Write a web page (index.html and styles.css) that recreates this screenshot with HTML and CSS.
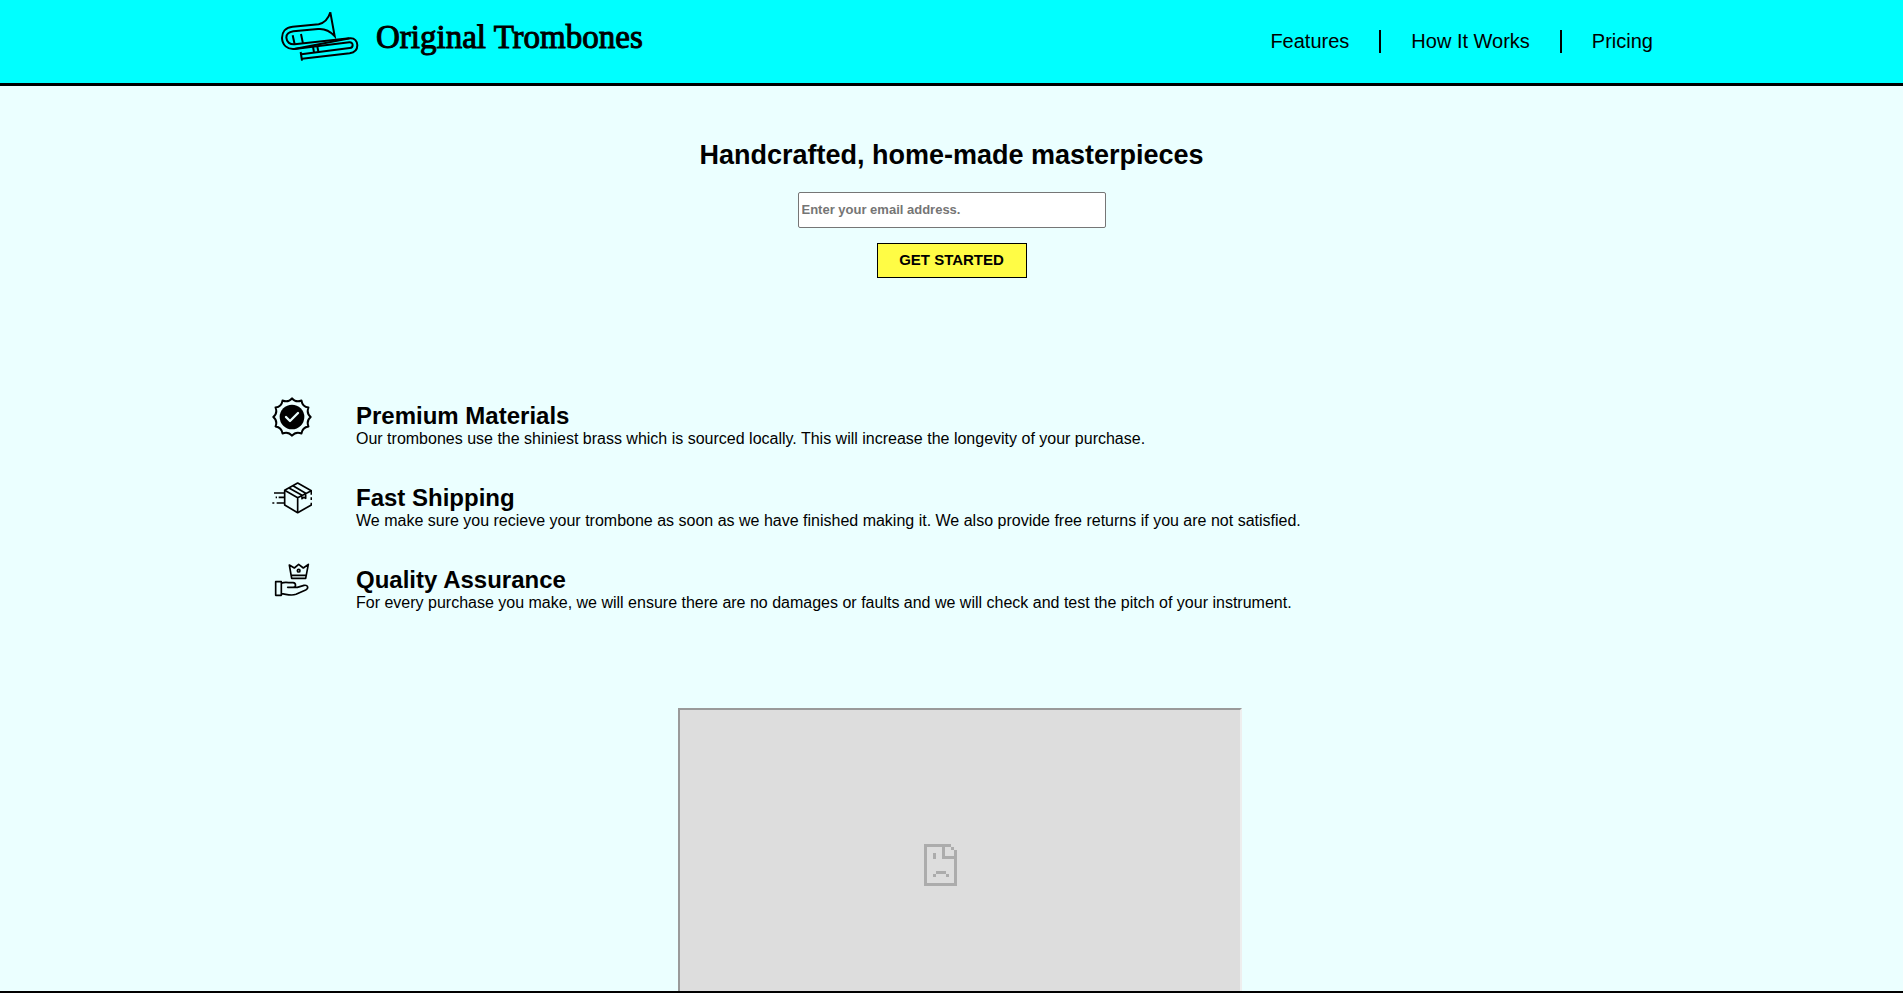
FILE: index.html
```html
<!DOCTYPE html>
<html lang="en">
<head>
  <meta charset="utf-8">
  <meta name="viewport" content="width=device-width, initial-scale=1">
  <title>Original Trombones</title>
  <link rel="stylesheet" href="styles.css">
</head>
<body>
  <header class="header">
    <div class="container header-inner">
      <a class="brand" href="#top">
        <svg class="brand-logo" viewBox="30 30 240 156" fill="none" stroke="#000" stroke-width="6" aria-hidden="true">
          <path d="M181 37C174 60 163 69 146 73L68 80C46 82 36 97 36 114C37 135 52 149 73 147L240 115C254 114 262 123 262 136C262 150 252 158 239 160L96 176"/>
          <path d="M181 37L194 108C178 91 163 85 144 87L70 94C56 96 49 103 49 113C50 127 60 134 74 133L238 115"/>
          <path d="M73 147L238 127C251 126 251 143 239 144L94 163"/>
          <path d="M92 156L96 182M68 106L74 133M93 102L99 131M129 140L132 157M142 139L145 155"/>
        </svg>
        <span class="brand-name">Original Trombones</span>
      </a>
      <nav class="nav" aria-label="Main">
        <a class="nav-link" href="#features">Features</a>
        <a class="nav-link" href="#how-it-works">How It Works</a>
        <a class="nav-link" href="#pricing">Pricing</a>
      </nav>
    </div>
  </header>

  <main class="main" id="top">
    <section class="hero">
      <h1 class="hero-title">Handcrafted, home-made masterpieces</h1>
      <form class="signup">
        <input class="signup-email" type="email" name="email" aria-label="Email address" placeholder="Enter your email address.">
        <button class="signup-button" type="submit">GET STARTED</button>
      </form>
    </section>

    <section class="container features" id="features">
      <article class="feature">
        <svg class="feature-icon" viewBox="36 36 120 120" aria-hidden="true">
          <g transform="translate(96 96)">
            <path fill="none" stroke="#000" stroke-width="6" stroke-linejoin="round" d="M0-56Q11.400-42.500 28.500-49.400Q31.100-31.100 49.400-28.500Q42.500-11.400 56 0Q42.500 11.400 49.400 28.500Q31.100 31.100 28.500 49.400Q11.400 42.500 0 56Q-11.400 42.500-28.500 49.400Q-31.100 31.100-49.400 28.500Q-42.500 11.400-56 0Q-42.500-11.400-49.400-28.500Q-31.100-31.100-28.500-49.400Q-11.400-42.500 0-56Z"/>
            <circle r="37"/>
            <path d="M-18 0L-6 12L18-12" fill="none" stroke="#ebffff" stroke-width="7" stroke-linecap="round" stroke-linejoin="round"/>
          </g>
        </svg>
        <div class="feature-text">
          <h2 class="feature-title">Premium Materials</h2>
          <p class="feature-copy">Our trombones use the shiniest brass which is sourced locally. This will increase the longevity of your purchase.</p>
        </div>
      </article>
      <article class="feature">
        <svg class="feature-icon" viewBox="36 27 120 120" fill="none" stroke="#000" stroke-width="5" stroke-linejoin="round" aria-hidden="true">
          <path d="M154 74V62L113 39L74 61V105L113 128L154 105V98M154 82V90"/>
          <path d="M74 61L113 83L154 62M113 83V128M87 54L126 76V86L131 82L137 85V70L99 47"/>
          <path d="M42 69H74M56 82H74M47 82H51M50 99H74M37 99H43"/>
        </svg>
        <div class="feature-text">
          <h2 class="feature-title">Fast Shipping</h2>
          <p class="feature-copy">We make sure you recieve your trombone as soon as we have finished making it. We also provide free returns if you are not satisfied.</p>
        </div>
      </article>
      <article class="feature">
        <svg class="feature-icon" viewBox="36 33 120 120" fill="none" stroke="#000" stroke-width="5" stroke-linejoin="round" stroke-linecap="round" aria-hidden="true">
          <path d="M95 85L88 45L103 54L116 43L130 54L145 43L137 85ZM95 76H138"/>
          <circle cx="116" cy="62" r="4"/>
          <path d="M47 95H64V136H47ZM64 100C73 96 80 97 86 98H99C109 99 109 112 99 112H83M99 112H112L132 106C144 104 147 115 137 120L108 133C92 139 78 132 64 131"/>
        </svg>
        <div class="feature-text">
          <h2 class="feature-title">Quality Assurance</h2>
          <p class="feature-copy">For every purchase you make, we will ensure there are no damages or faults and we will check and test the pitch of your instrument.</p>
        </div>
      </article>
    </section>

    <section class="video" id="how-it-works">
      <div class="video-frame" role="img" aria-label="Video unavailable">
        <svg class="video-icon" viewBox="0 0 33 42" fill="#acacac" shape-rendering="crispEdges" aria-hidden="true">
          <path d="M0 0H27V3H21V12H30V6H33V42H0ZM3 3V39H30V15H18V3Z" fill-rule="evenodd"/>
          <path d="M27 3H30V6H27ZM9 9H12V15H9ZM12 27H22V30H12ZM9 30H12V33H9ZM22 30H25V33H22Z"/>
        </svg>
      </div>
    </section>
  </main>
</body>
</html>
```
FILE: styles.css
```css
* {
  box-sizing: border-box;
  margin: 0;
  padding: 0;
}

body {
  display: flex;
  flex-direction: column;
  height: 100vh;
  background: #ebffff;
  color: #000;
  font-family: "Liberation Sans", Arial, sans-serif;
  font-size: 16px;
}

a {
  color: inherit;
  text-decoration: none;
}

.container {
  width: 100%;
  max-width: 1403px;
  margin: 0 auto;
}

.header {
  flex: none;
  background: #00ffff;
  border-bottom: 3px solid #000;
}

.header-inner {
  display: flex;
  justify-content: space-between;
  align-items: flex-start;
  padding: 10px 0 21px 30px;
}

.brand {
  display: flex;
  align-items: center;
  gap: 16px;
}

.brand-logo {
  width: 80px;
  height: 52px;
}

.brand-name {
  padding-top: 2px;
  font-family: Georgia, "Liberation Serif", serif;
  font-size: 33px;
  -webkit-text-stroke: 1px #000;
}

.nav {
  display: flex;
  padding-top: 20px;
  font-size: 20px;
  line-height: 23px;
}

.nav-link + .nav-link {
  margin-left: 30px;
  padding-left: 30px;
  border-left: 2px solid #000;
}

.main {
  flex: 1;
  min-height: 0;
  overflow: hidden;
  border-bottom: 2px solid #000;
}

.hero {
  padding-top: 53px;
  text-align: center;
}

.hero-title {
  font-size: 27px;
  line-height: 32px;
}

.signup {
  display: flex;
  flex-direction: column;
  align-items: center;
  gap: 15px;
  padding-top: 21px;
}

.signup-email {
  width: 308px;
  height: 36px;
  padding: 0 3px 2px;
  border: 1px solid #767676;
  border-radius: 2px;
  background: #fff;
  font: bold 13px "Liberation Sans", Arial, sans-serif;
}

.signup-email::placeholder {
  color: #757575;
}

.signup-button {
  width: 150px;
  height: 35px;
  padding-bottom: 2px;
  border: 1px solid #000;
  background: #fffc45;
  color: #000;
  font: bold 15px "Liberation Sans", Arial, sans-serif;
}

.features {
  display: flex;
  flex-direction: column;
  gap: 30px;
  padding: 119px 0 0 22px;
}

.feature {
  display: flex;
  align-items: flex-start;
  gap: 44px;
}

.feature-icon {
  flex: none;
  width: 40px;
  height: 40px;
}

.feature-text {
  padding: 5px 0 1px;
}

.feature-title {
  font-size: 24px;
  line-height: 28px;
}

.feature-copy {
  line-height: 18px;
}

.video {
  display: flex;
  justify-content: center;
  padding: 95px 0 0 17px;
}

.video-frame {
  display: flex;
  align-items: center;
  justify-content: center;
  width: 564px;
  height: 319px;
  padding: 0 40px 5px 0;
  border: 2px solid;
  border-color: #9a9a9a #eee #eee #9a9a9a;
  background: #ddd;
}

.video-icon {
  width: 33px;
  height: 42px;
}
```
